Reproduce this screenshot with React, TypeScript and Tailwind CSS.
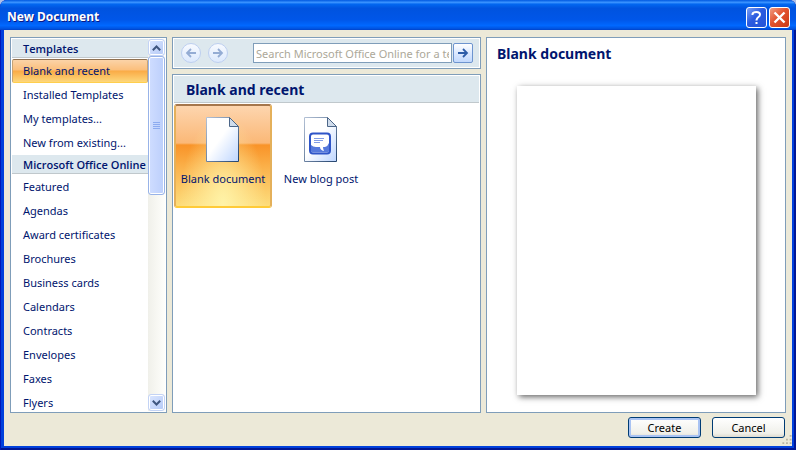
import React, { useState } from "react";

const templates = ["Blank and recent", "Installed Templates", "My templates...", "New from existing..."];
const online = [
  "Featured",
  "Agendas",
  "Award certificates",
  "Brochures",
  "Business cards",
  "Calendars",
  "Contracts",
  "Envelopes",
  "Faxes",
  "Flyers",
];

function ArrowIcon({ flip = false }: { flip?: boolean }) {
  return (
    <svg width="12" height="12" viewBox="0 0 12 12" fill="none" stroke="currentColor" strokeWidth="1.8" aria-hidden="true">
      <path d={flip ? "M11 6H2M6 2L2 6l4 4" : "M1 6h9M6 2l4 4-4 4"} />
    </svg>
  );
}

function Heading({ children }: { children: React.ReactNode }) {
  return (
    <h2 className="mb-px h-[19px] border-b border-[#c0c8cc] bg-[#dde8ee] pl-[11px] font-['Open_Sans',sans-serif] text-[11px] leading-5 font-semibold whitespace-nowrap text-[#00156e]">
      {children}
    </h2>
  );
}

function ListItem({ label, selected, onSelect }: { label: string; selected: boolean; onSelect: () => void }) {
  return (
    <li>
      <button
        type="button"
        onClick={onSelect}
        aria-pressed={selected}
        className={
          "block h-6 w-full rounded-[2px] border pl-[10px] text-left text-[11px] leading-[22px] text-[#00156e] " +
          (selected
            ? "border-[#c6a477] border-t-[#8e7050] border-b-[#ffcf4c] bg-[linear-gradient(#fbd3a8,#fbbf7c_45%,#faab46_50%,#fdd77b)]"
            : "border-transparent")
        }
      >
        {label}
      </button>
    </li>
  );
}

function ScrollButton({ label, down = false }: { label: string; down?: boolean }) {
  return (
    <button
      type="button"
      aria-label={label}
      className="flex h-[17px] w-full shrink-0 items-center justify-center rounded-[3px] border border-[#c3d3f5] bg-[linear-gradient(135deg,#dce7ff,#b4c9f7)] text-[#3f567f] ring-1 ring-white ring-inset"
    >
      <svg width="9" height="6" viewBox="0 0 9 6" fill="none" stroke="currentColor" strokeWidth="2" aria-hidden="true">
        <path d={down ? "M.8.8L4.5 4.5 8.2.8" : "M.8 5.2L4.5 1.5 8.2 5.2"} />
      </svg>
    </button>
  );
}

function PageIcon({ blog = false }: { blog?: boolean }) {
  const id = blog ? "paper-blog" : "paper-blank";
  return (
    <svg width="34" height="46" viewBox="0 0 34 46" aria-hidden="true">
      <defs>
        <linearGradient id={id} x1="0" y1="0" x2="1" y2="1">
          <stop offset=".45" stopColor="#fff" />
          <stop offset="1" stopColor="#bdd5ff" />
        </linearGradient>
        <linearGradient id={id + "-edge"} x1="0" y1="0" x2="1" y2="1">
          <stop offset="0" stopColor="#b4c2d6" />
          <stop offset="1" stopColor="#24446e" />
        </linearGradient>
      </defs>
      <path d="M.5.5h23l9 9v35H.5z" fill={`url(#${id})`} stroke={`url(#${id}-edge)`} />
      <path d="M23.500 .5v9h9z" fill="#cfdcec" stroke="#4c6688" />
      {blog && (
        <g>
          <rect x="6" y="16.500" width="20" height="20" rx="3" fill="#fff" stroke="#2f55c8" strokeWidth="2" />
          <path d="M7 28q2 2 5 2h4q0 3 4 4-1-2-1-4h2q3-1 4-4v8q0 1.500-1.500 1.500h-15Q7 35.500 7 34z" fill="#5679dc" />
          <path d="M10 21.500h10M10 23.500h9M10 25.500h6" stroke="#829de7" />
        </g>
      )}
    </svg>
  );
}

function DocumentTile({ label, blog, selected, onSelect }: { label: string; blog?: boolean; selected: boolean; onSelect: () => void }) {
  return (
    <button
      type="button"
      onClick={onSelect}
      aria-pressed={selected}
      className={
        "flex h-[104px] w-[98px] flex-col items-center gap-2 rounded-[3px] border-2 pt-[11px] text-[11px] leading-4 whitespace-nowrap text-[#00156e] " +
        (selected
          ? "border-[#e4b05a] border-t-[#a5764c] border-b-[#ffcb38] bg-[radial-gradient(ellipse_at_bottom,#fff3a8_0%,transparent_65%),linear-gradient(#fdd5ae,#fbb877_37%,#f99328_39%,#fbb650_65%,#fddd7c)]"
          : "border-transparent")
      }
    >
      <PageIcon blog={blog} />
      {label}
    </button>
  );
}

const panel = "border border-[#7f9db9] bg-white";
const roundNav =
  "flex size-5 items-center justify-center rounded-full border border-[#bdcff0] bg-[linear-gradient(#f7faff,#dce9fd)] text-[#94acd4]";
const command =
  "h-[21px] w-[73px] rounded-[3px] border border-[#003c74] bg-[linear-gradient(#fff,#f0f0ea_80%,#dedbd0)] text-[11px] leading-[19px] text-black";
const caption = "flex size-[21px] items-center justify-center rounded-[3px] border border-white text-white";

export default function App() {
  const [category, setCategory] = useState("Blank and recent");
  const [tile, setTile] = useState("Blank document");

  return (
    <div className="bg-[#aebfe8] font-['Noto_Sans',sans-serif]">
      <div className="flex h-screen flex-col overflow-hidden rounded-t-[7px] bg-[#0040dc] shadow-[inset_1px_0_#0019b8,inset_-2px_-2px_#001694]">
        <header className="flex h-[30px] shrink-0 items-center justify-between bg-[linear-gradient(#0058e0,#3a93ff_8%,#0267f0_14%,#0053df_28%,#0056e8_65%,#0068ff_85%,#0050dc_97%,#003dc4)] pt-1 pr-[6px] pl-[7px]">
          <h1 className="text-[12px] leading-5 font-bold text-white [text-shadow:1px_1px_#0a1883]">New Document</h1>
          <div className="flex gap-[2px]">
            <button type="button" aria-label="Help" className={caption + " bg-[linear-gradient(135deg,#7ba0f5,#2b5be0_45%,#2455d8)]"}>
              <svg width="13" height="15" viewBox="0 0 13 15" fill="none" stroke="currentColor" strokeWidth="2" aria-hidden="true">
                <path d="M2.500 5V4Q3 2 6.500 2T10 4.500q0 1.500-1.500 2.500T6.500 10v.5M6.500 12v2" />
              </svg>
            </button>
            <button type="button" aria-label="Close" className={caption + " bg-[linear-gradient(135deg,#f09d83,#e2532f_45%,#cc3a15)]"}>
              <svg width="13" height="13" viewBox="0 0 13 13" fill="none" stroke="currentColor" strokeWidth="2.400" aria-hidden="true">
                <path d="M1.500 1.500l10 10M11.500 1.500l-10 10" />
              </svg>
            </button>
          </div>
        </header>

        <div className="mx-1 mb-1 flex min-h-0 flex-1 flex-col bg-[#ece9d8] px-[6px] pt-[7px]">
          <main className="grid min-h-0 flex-1 grid-cols-[157px_309fr_300fr] grid-rows-1 gap-[5px]">
            <nav aria-label="Template categories" className={panel + " flex min-h-0 p-px"}>
              <div className="min-w-0 flex-1 overflow-hidden">
                <Heading>Templates</Heading>
                <ul>
                  {templates.map((t) => (
                    <ListItem key={t} label={t} selected={t === category} onSelect={() => setCategory(t)} />
                  ))}
                </ul>
                <Heading>Microsoft Office Online</Heading>
                <ul>
                  {online.map((t) => (
                    <ListItem key={t} label={t} selected={t === category} onSelect={() => setCategory(t)} />
                  ))}
                </ul>
              </div>
              <div className="flex w-[17px] flex-col bg-[linear-gradient(90deg,#f0f0ea,#fefefb)]">
                <ScrollButton label="Scroll up" />
                <div className="min-h-0 flex-1">
                  <div className="flex h-[139px] flex-col items-center justify-center gap-px rounded-[3px] border border-[#98b3e8] bg-[linear-gradient(90deg,#cfddff,#bccffb)] ring-1 ring-white ring-inset">
                    <span className="h-px w-[7px] bg-[#8cabf0]" />
                    <span className="h-px w-[7px] bg-[#8cabf0]" />
                    <span className="h-px w-[7px] bg-[#8cabf0]" />
                    <span className="h-px w-[7px] bg-[#8cabf0]" />
                  </div>
                </div>
                <ScrollButton label="Scroll down" down />
              </div>
            </nav>

            <div className="flex min-h-0 min-w-0 flex-col gap-[5px]">
              <div className={panel + " shrink-0 p-px"}>
                <form className="flex h-7 items-center bg-[#dde8ee] pr-[6px] pl-[7px]" onSubmit={(e) => e.preventDefault()}>
                  <div className="mr-[25px] flex gap-[7px]">
                    <button type="button" aria-label="Back" className={roundNav}>
                      <ArrowIcon flip />
                    </button>
                    <button type="button" aria-label="Forward" className={roundNav}>
                      <ArrowIcon />
                    </button>
                  </div>
                  <input
                    type="text"
                    aria-label="Search templates"
                    placeholder="Search Microsoft Office Online for a template"
                    className="mr-px h-5 min-w-0 flex-1 border border-[#7f9db9] bg-white px-[2px] text-[11px] leading-4 outline-none placeholder:text-[#aca899]"
                  />
                  <button
                    type="submit"
                    aria-label="Search"
                    className="flex size-5 items-center justify-center rounded-[2px] border border-[#6d94cf] bg-[linear-gradient(#fff,#dce9ff_50%,#c2d9fd)] text-[#2e5da8]"
                  >
                    <ArrowIcon />
                  </button>
                </form>
              </div>
              <section className={panel + " min-h-0 flex-1 overflow-hidden p-px"}>
                <h2 className="mb-px h-[27px] border-b border-[#c0c8cc] bg-[#dde8ee] pl-3 text-[14px] leading-7 font-bold text-[#00156e]">
                  {category}
                </h2>
                <div className="flex flex-wrap">
                  <DocumentTile label="Blank document" selected={tile === "Blank document"} onSelect={() => setTile("Blank document")} />
                  <DocumentTile label="New blog post" blog selected={tile === "New blog post"} onSelect={() => setTile("New blog post")} />
                </div>
              </section>
            </div>

            <section className={panel + " flex min-h-0 min-w-0 flex-col pt-[6px] pr-[29px] pb-[17px] pl-[30px]"}>
              <h2 className="-ml-5 text-[14px] leading-5 font-bold text-[#00156e]">{tile}</h2>
              <div className="mt-[22px] flex-1 bg-white shadow-[2px_2px_6px_#666]" />
            </section>
          </main>

          <footer className="flex h-[33px] shrink-0 items-start justify-end gap-[11px] pt-1">
            <button type="button" className={command + " shadow-[inset_0_0_0_2px_#a9c3f3,inset_0_-2px_#6982ee]"}>
              Create
            </button>
            <button type="button" className={command}>
              Cancel
            </button>
            <svg width="11" height="11" viewBox="0 0 11 11" className="-mr-[6px] -ml-[15px] self-end pb-px" fill="#b8b4a3" aria-hidden="true">
              <path d="M9 0h2v2H9zM5 4h2v2H5zM9 4h2v2H9zM1 8h2v2H1zM5 8h2v2H5zM9 8h2v2H9z" />
            </svg>
          </footer>
        </div>
      </div>
    </div>
  );
}
